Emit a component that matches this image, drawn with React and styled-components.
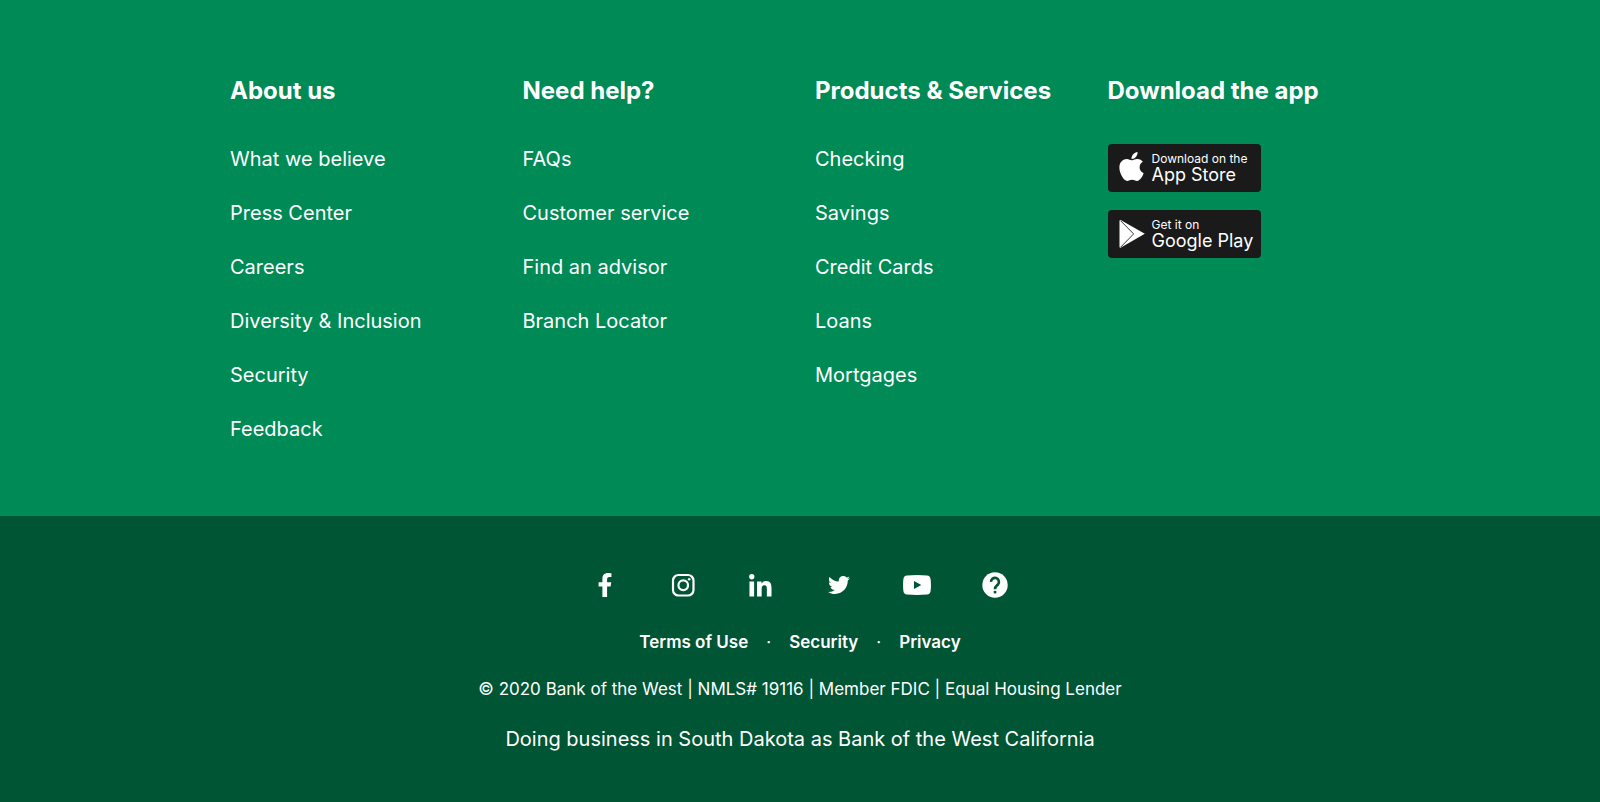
import React from "react";
import styled, { createGlobalStyle } from "styled-components";
import { FaApple, FaFacebookF, FaTwitter } from "react-icons/fa";

const GlobalStyle = createGlobalStyle`
  *, *::before, *::after { box-sizing: border-box; }
  body {
    margin: 0;
    background: #005534;
    color: #fff;
    font-family: Inter, "Liberation Sans", sans-serif;
  }
  a { color: inherit; text-decoration: none; }
  a:hover { text-decoration: underline; }
`;

const Main = styled.nav`
  background: #008a56;
  padding: 73px 0 60px;
`;

const Columns = styled.div`
  max-width: 1170px;
  margin: 0 auto;
  display: grid;
  grid-template-columns: repeat(4, 1fr);

  @media (max-width: 900px) {
    grid-template-columns: repeat(2, 1fr);
    row-gap: 40px;
  }
`;

const Column = styled.section`
  padding: 0 0 0 15px;
`;

const Heading = styled.h2`
  margin: 0 0 23px;
  font-size: 24px;
  line-height: 36px;
  font-weight: 700;
  white-space: nowrap;
`;

const LinkList = styled.ul`
  list-style: none;
  margin: 0;
  padding: 0;
`;

const LinkItem = styled.li`
  font-size: 20px;
  line-height: 54px;
`;

const Badges = styled.div`
  display: flex;
  flex-direction: column;
  align-items: flex-start;
  gap: 18px;
  padding-top: 12px;
`;

const Badge = styled.a`
  display: flex;
  align-items: center;
  gap: 7px;
  width: 153px;
  height: 48px;
  padding-left: 11px;
  border-radius: 4px;
  background: #1a1a1a;
`;

const BadgeIcon = styled.span`
  display: flex;
  flex: none;
  justify-content: center;
  width: 26px;
`;

const BadgeText = styled.span`
  display: flex;
  flex-direction: column;
  white-space: nowrap;
`;

const BadgeSmall = styled.span`
  font-size: 12px;
  line-height: 14px;
`;

const BadgeLarge = styled.span`
  font-size: 18px;
  line-height: 18px;
`;

const Bottom = styled.div`
  background: #005534;
  padding: 49px 16px 48px;
  text-align: center;
`;

const Social = styled.div`
  display: flex;
  justify-content: center;
`;

const SocialLink = styled.a`
  display: flex;
  align-items: center;
  justify-content: center;
  width: 78px;
  height: 40px;
`;

const Legal = styled.div`
  display: flex;
  justify-content: center;
  gap: 18px;
  margin-top: 24px;
  font-size: 17px;
  line-height: 26px;
  font-weight: 600;
`;

const Dot = styled.span`
  font-weight: 400;
`;

const Note = styled.p`
  margin: 20px 0 0;
  font-size: ${(p) => (p.$large ? 20 : 17)}px;
  line-height: ${(p) => (p.$large ? 32 : 28)}px;
`;

const columns = [
  {
    title: "About us",
    links: ["What we believe", "Press Center", "Careers", "Diversity & Inclusion", "Security", "Feedback"],
  },
  { title: "Need help?", links: ["FAQs", "Customer service", "Find an advisor", "Branch Locator"] },
  { title: "Products & Services", links: ["Checking", "Savings", "Credit Cards", "Loans", "Mortgages"] },
];

const AppleIcon = () => (
  <svg width="26" height="33" viewBox="0 0 26 33">
    <g transform="translate(-4 -2)">
      <FaApple size={33} />
    </g>
  </svg>
);

const InstagramIcon = () => (
  <svg width="24" height="24" viewBox="0 0 24 24" fill="none" stroke="#fff" strokeWidth="2.2">
    <rect x="2" y="2" width="20.5" height="20.5" rx="5.5" />
    <circle cx="12.250" cy="12.250" r="4.8" />
    <circle cx="18.200" cy="6.300" r="1.3" fill="#fff" stroke="none" />
  </svg>
);

const LinkedinIcon = () => (
  <svg width="24" height="24" viewBox="10 0 480 480" fill="#fff">
    <path d="M100.280 448H7.400V148.900h92.880zM53.790 108.100C24.090 108.100 0 83.500 0 53.800a53.790 53.790 0 0 1 107.580 0c0 29.700-24.100 54.300-53.790 54.300zM447.900 448h-92.680V302.400c0-34.700-.7-79.200-48.290-79.200-48.290 0-55.690 37.700-55.690 76.700V448h-92.780V148.900h89.080v40.800h1.300c12.400-23.500 42.690-48.300 87.880-48.300 94 0 111.280 61.900 111.280 142.300V448z" transform="translate(12 20)" />
  </svg>
);

const YoutubeIcon = () => (
  <svg width="28" height="20" viewBox="0 0 28 20" fill="#fff">
    <path
      fillRule="evenodd"
      d="M4 .4Q14-.4 24 .4Q27.2.7 27.6 4Q28.3 10 27.6 16Q27.2 19.3 24 19.6Q14 20.4 4 19.6Q.8 19.3.4 16Q-.3 10 .4 4Q.8.7 4 .4ZM11 6V14L18.300 10Z"
    />
  </svg>
);

const HelpIcon = () => (
  <svg width="26" height="26" viewBox="0 0 26 26">
    <circle cx="13" cy="13" r="12.700" fill="#fff" />
    <path
      d="M9 9.900A3.950 3.950 0 1 1 16.100 12.200C15.300 13.500 13 14.300 13 17.200"
      fill="none"
      stroke="#005534"
      strokeWidth="2.600"
    />
    <rect x="11.700" y="18.900" width="2.600" height="2.500" fill="#005534" />
  </svg>
);

const PlayIcon = () => (
  <svg width="27" height="30" viewBox="0 0 27 30">
    <path d="M1.200.3L26.800 14.800L1.200 29.500Q.5 29 .5 28V2Q.5 1 1.200.3Z" fill="#fff" />
    <path d="M1.600 1.200L15.200 14.900L1.600 28.800" fill="none" stroke="#1a1a1a" strokeWidth=".9" />
  </svg>
);

const social = [
  ["Facebook", <FaFacebookF size={24} />],
  ["Instagram", <InstagramIcon />],
  ["LinkedIn", <LinkedinIcon />],
  ["Twitter", <FaTwitter size={22} />],
  ["YouTube", <YoutubeIcon />],
  ["Help", <HelpIcon />],
];

function StoreBadge({ icon, small, large }) {
  return (
    <Badge href="#">
      <BadgeIcon>{icon}</BadgeIcon>
      <BadgeText>
        <BadgeSmall>{small}</BadgeSmall>
        <BadgeLarge>{large}</BadgeLarge>
      </BadgeText>
    </Badge>
  );
}

export default function App() {
  return (
    <footer>
      <GlobalStyle />
      <Main aria-label="Footer">
        <Columns>
          {columns.map((c) => (
            <Column key={c.title}>
              <Heading>{c.title}</Heading>
              <LinkList>
                {c.links.map((l) => (
                  <LinkItem key={l}>
                    <a href="#">{l}</a>
                  </LinkItem>
                ))}
              </LinkList>
            </Column>
          ))}
          <Column>
            <Heading>Download the app</Heading>
            <Badges>
              <StoreBadge icon={<AppleIcon />} small="Download on the" large="App Store" />
              <StoreBadge icon={<PlayIcon />} small="Get it on" large="Google Play" />
            </Badges>
          </Column>
        </Columns>
      </Main>
      <Bottom>
        <Social>
          {social.map(([name, icon]) => (
            <SocialLink key={name} href="#" aria-label={name}>
              {icon}
            </SocialLink>
          ))}
        </Social>
        <Legal>
          <a href="#">Terms of Use</a>
          <Dot aria-hidden="true">·</Dot>
          <a href="#">Security</a>
          <Dot aria-hidden="true">·</Dot>
          <a href="#">Privacy</a>
        </Legal>
        <Note>© 2020 Bank of the West | NMLS# 19116 | Member FDIC | Equal Housing Lender</Note>
        <Note $large>Doing business in South Dakota as Bank of the West California</Note>
      </Bottom>
    </footer>
  );
}
